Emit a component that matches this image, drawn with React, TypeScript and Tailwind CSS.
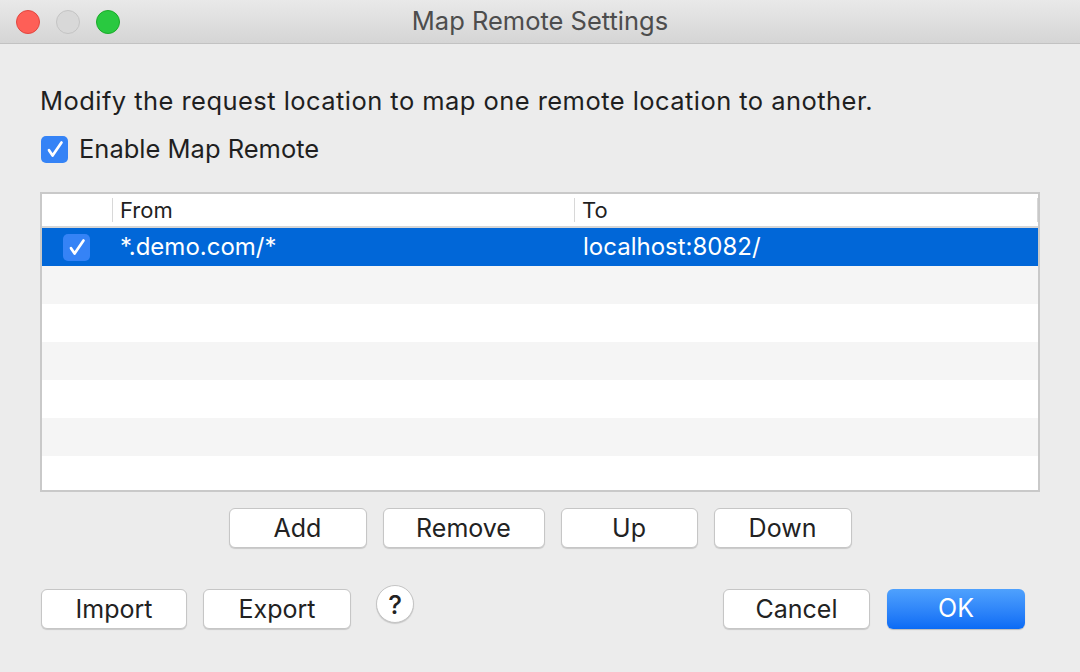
import React from "react";

const font = { fontFamily: '"Inter", "Liberation Sans", sans-serif' };

function Check() {
  return (
    <div className="flex h-[27px] w-[27px] items-center justify-center rounded-[5px] bg-[#3583f6]">
      <svg width="27" height="27" viewBox="0 0 27 27" fill="none">
        <path d="M8 14.2 L11.6 19.6 L20.5 6.5" stroke="white" strokeWidth="2.7" strokeLinecap="round" strokeLinejoin="round" />
      </svg>
    </div>
  );
}

function Btn({ children, w }: { children: React.ReactNode; w: string }) {
  return (
    <button className={`${w} h-[40px] rounded-[6px] border border-[#c6c6c6] bg-white text-[25px] leading-[38px] text-[#222] shadow-[0_1px_1px_rgba(0,0,0,0.15)]`}>
      {children}
    </button>
  );
}

export default function App() {
  const rows = [0, 1, 2, 3, 4];
  return (
    <div style={font} className="flex h-[672px] w-[1080px] flex-col overflow-hidden bg-[#ececec] text-[#1f1f1f]">
      <div className="relative flex h-[44px] shrink-0 items-center justify-center border-b border-[#c2c2c2] bg-gradient-to-b from-[#e9e9e9] to-[#d5d5d5]">
        <div className="absolute left-[16px] top-[10px] flex gap-[16px]">
          <div className="h-[24px] w-[24px] rounded-full border border-[#e2463f] bg-[#fe5f57]" />
          <div className="h-[24px] w-[24px] rounded-full border border-[#c4c4c4] bg-[#d8d8d8]" />
          <div className="h-[24px] w-[24px] rounded-full border border-[#1aab29] bg-[#29c940]" />
        </div>
        <span className="text-[25.5px] text-[#4d4d4d]">Map Remote Settings</span>
      </div>

      <div className="flex flex-col px-[40px] pt-[41px]">
        <div className="h-[32px] text-[25.5px] leading-[32px] tracking-[0.45px]">Modify the request location to map one remote location to another.</div>
        <div className="mt-[16px] flex h-[32px] items-center gap-[11px] pl-[1px]">
          <Check />
          <span className="text-[25.5px] leading-[32px]">Enable Map Remote</span>
        </div>

        <div className="mt-[27px] flex h-[300px] w-[1000px] flex-col border-2 border-[#c9c9c9] bg-white">
          <div className="flex h-[34px] shrink-0 items-center border-b-2 border-[#d6d6d6] text-[22px]">
            <div className="h-[24px] w-[71px] border-r border-[#d8d8d8]" />
            <div className="flex h-[24px] w-[462px] items-center border-r border-[#d8d8d8] pl-[7px]">From</div>
            <div className="flex h-[24px] flex-1 items-center border-r border-[#d8d8d8] pl-[7px]">To</div>
          </div>
          <div className="flex h-[38px] shrink-0 items-center bg-[#0167d8] text-[24px] text-white">
            <div className="flex w-[72px] pl-[21px]">
              <Check />
            </div>
            <div className="w-[463px] pl-[6px]">*.demo.com/*</div>
            <div className="flex-1 pl-[6px]">localhost:8082/</div>
          </div>
          {rows.map((i) => (
            <div key={i} className={`h-[38px] shrink-0 ${i % 2 === 0 ? "bg-[#f5f5f5]" : "bg-white"}`} />
          ))}
          <div className="flex-1 bg-white" />
        </div>

        <div className="mt-[16px] flex justify-center gap-[16px]">
          <Btn w="w-[138px]">Add</Btn>
          <Btn w="w-[162px]">Remove</Btn>
          <Btn w="w-[137px]">Up</Btn>
          <Btn w="w-[138px]">Down</Btn>
        </div>

        <div className="mt-[41px] flex items-center pl-[1px]">
          <Btn w="w-[146px]">Import</Btn>
          <div className="ml-[16px]">
            <Btn w="w-[148px]">Export</Btn>
          </div>
          <div className="-mt-[10px] ml-[25px] flex h-[38px] w-[38px] items-center justify-center rounded-full border border-[#c4c4c4] bg-white text-[26px] font-medium text-[#222] shadow-[0_1px_1px_rgba(0,0,0,0.15)]">
            ?
          </div>
          <div className="flex-1" />
          <Btn w="w-[147px]">Cancel</Btn>
          <button className="ml-[17px] mr-[15px] h-[40px] w-[138px] rounded-[6px] bg-gradient-to-b from-[#4fa1fd] to-[#0a6bf5] text-[25px] text-white shadow-[0_1px_1px_rgba(0,0,0,0.2)]">
            OK
          </button>
        </div>
      </div>
    </div>
  );
}
